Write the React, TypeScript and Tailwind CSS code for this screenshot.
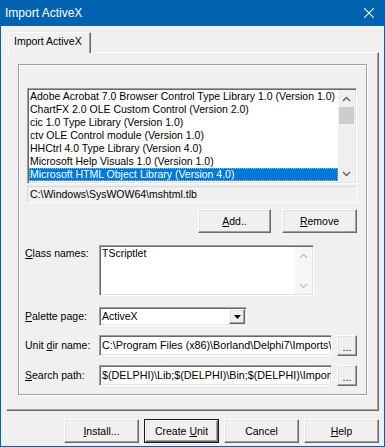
import React from "react";

const libraries = [
  "Adobe Acrobat 7.0 Browser Control Type Library 1.0 (Version 1.0)",
  "ChartFX 2.0 OLE Custom Control (Version 2.0)",
  "cic 1.0 Type Library (Version 1.0)",
  "ctv OLE Control module (Version 1.0)",
  "HHCtrl 4.0 Type Library (Version 4.0)",
  "Microsoft Help Visuals 1.0 (Version 1.0)",
  "Microsoft HTML Object Library (Version 4.0)",
];

const raised =
  "bg-[#f0f0f0] border border-t-white border-l-white border-r-[#696969] border-b-[#696969] shadow-[inset_-1px_-1px_0_#a0a0a0,inset_1px_1px_0_#e3e3e3]";
const sunken =
  "border border-t-[#a0a0a0] border-l-[#a0a0a0] border-r-white border-b-white shadow-[inset_1px_1px_0_#696969,inset_-1px_-1px_0_#e3e3e3]";

function Chevron({ up, color = "#606060" }: { up?: boolean; color?: string }) {
  return (
    <svg width="9" height="6" viewBox="0 0 9 6">
      <path
        d={up ? "M1 5L4.5 1.5L8 5" : "M1 1L4.5 4.5L8 1"}
        stroke={color}
        strokeWidth="1.4"
        fill="none"
      />
    </svg>
  );
}

function Button({ children, className = "" }: { children: React.ReactNode; className?: string }) {
  return (
    <div className={`${raised} flex items-center justify-center ${className}`}>
      <span className="whitespace-pre">{children}</span>
    </div>
  );
}

function Label({ children }: { children: React.ReactNode }) {
  return <div className="w-[74px] -ml-[2px] shrink-0">{children}</div>;
}

export default function App() {
  return (
    <div className="w-[385px] h-[447px] bg-[#0063b1] flex flex-col font-['Liberation_Sans',Arial,sans-serif] text-[10.5px] leading-[13px] text-black select-none">
      <div className="h-[26px] shrink-0 flex items-center pl-[5px] pr-[11px] text-white text-[12px]">
        <span className="flex-1">Import ActiveX</span>
        <svg width="10" height="10" viewBox="0 0 10 10">
          <path d="M0 0L10 10M10 0L0 10" stroke="#fff" strokeWidth="1.1" />
        </svg>
      </div>

      <div className="flex-1 mx-px mb-px bg-[#f0f0f0] flex flex-col">
        {/* tab strip */}
        <div className="pl-[7px] pt-[6px] flex">
          <div className="relative z-10 -mb-px h-[21px] w-[83px] bg-[#f0f0f0] border-t border-l border-r border-t-white border-l-white border-r-[#696969] shadow-[inset_-1px_0_0_#a0a0a0] pl-[5px] pt-[2px]">
            Import ActiveX
          </div>
        </div>

        {/* tab page */}
        <div className="ml-[5px] w-[373px] h-[359px] border border-t-white border-l-white border-r-[#696969] border-b-[#696969] shadow-[inset_-1px_-1px_0_#a0a0a0] pl-[11px] pt-[11px]">
          <div className="w-[349px] h-[331px] border border-[#a0a0a0] shadow-[inset_1px_1px_0_#fff,1px_1px_0_#fff] pl-[8px] pt-[23px] flex flex-col">
            {/* library list */}
            <div className={`w-[330px] h-[96px] bg-white ${sunken} p-px flex`}>
              <div className="flex-1 flex flex-col">
                {libraries.map((lib, i) => (
                  <div
                    key={lib}
                    className={`h-[13px] pl-[1px] whitespace-nowrap overflow-hidden ${
                      i === libraries.length - 1
                        ? "bg-[#0078d7] text-white outline outline-1 outline-dotted -outline-offset-1 outline-[#8cc4f4]"
                        : ""
                    }`}
                  >
                    {lib}
                  </div>
                ))}
              </div>
              <div className="w-[17px] bg-[#f0f0f0] flex flex-col">
                <div className="h-[17px] flex items-center justify-center">
                  <Chevron up />
                </div>
                <div className="h-[17px] mx-px bg-[#cdcdcd]" />
                <div className="flex-1" />
                <div className="h-[17px] flex items-center justify-center">
                  <Chevron />
                </div>
              </div>
            </div>

            {/* file path */}
            <div className="mt-[2px] w-[330px] h-[17px] border border-t-[#d9d9d9] border-l-[#d9d9d9] border-r-white border-b-white pl-[2px] flex items-center whitespace-nowrap">
              {"C:\\Windows\\SysWOW64\\mshtml.tlb"}
            </div>

            <div className="mt-[6px] flex gap-[11px] pl-[171px]">
              <Button className="w-[73px] h-[24px]">
                <span className="underline">A</span>dd..
              </Button>
              <Button className="w-[75px] h-[24px]">
                <span className="underline">R</span>emove
              </Button>
            </div>

            {/* class names */}
            <div className="mt-[12px] flex">
              <Label>
                <div className="pt-[2px]">
                  <span className="underline">C</span>lass names:
                </div>
              </Label>
              <div className={`w-[215px] h-[51px] bg-white ${sunken} p-px flex`}>
                <div className="flex-1 pl-px">TScriptlet</div>
                <div className="w-[17px] flex flex-col justify-between bg-[#f7f7f7]">
                  <div className="h-[17px] flex items-center justify-center">
                    <Chevron up color="#c0c0c0" />
                  </div>
                  <div className="h-[17px] flex items-center justify-center">
                    <Chevron color="#c0c0c0" />
                  </div>
                </div>
              </div>
            </div>

            {/* palette page */}
            <div className="mt-[11px] flex items-center">
              <Label>
                <span className="underline">P</span>alette page:
              </Label>
              <div className={`w-[148px] h-[19px] bg-white ${sunken} p-px flex`}>
                <div className="flex-1 flex items-center pl-px">ActiveX</div>
                <div className={`${raised} w-[16px] flex items-center justify-center`}>
                  <svg width="7" height="4" viewBox="0 0 7 4">
                    <path d="M0 0H7L3.5 4Z" fill="#000" />
                  </svg>
                </div>
              </div>
            </div>

            {/* unit dir */}
            <div className="mt-[9px] flex items-center">
              <Label>
                Unit <span className="underline">d</span>ir name:
              </Label>
              <div className={`w-[233px] h-[21px] bg-white ${sunken} px-[2px] flex items-center overflow-hidden whitespace-nowrap text-[10.75px]`}>
                {"C:\\Program Files (x86)\\Borland\\Delphi7\\Imports\\"}
              </div>
              <Button className="ml-[5px] w-[20px] h-[21px] pt-[3px]">...</Button>
            </div>

            {/* search path */}
            <div className="mt-[9px] flex items-center">
              <Label>
                <span className="underline">S</span>earch path:
              </Label>
              <div className={`w-[233px] h-[21px] bg-white ${sunken} px-[2px] flex items-center overflow-hidden whitespace-nowrap text-[10.75px]`}>
                {"$(DELPHI)\\Lib;$(DELPHI)\\Bin;$(DELPHI)\\Imports"}
              </div>
              <Button className="ml-[5px] w-[20px] h-[21px] pt-[3px]">...</Button>
            </div>
          </div>
        </div>

        {/* dialog buttons */}
        <div className="mt-[8px] flex justify-end gap-[5px] pr-[5px]">
          <Button className="w-[75px] h-[24px]">
            <span className="underline">I</span>nstall...
          </Button>
          <div className="w-[75px] h-[24px] border border-[#1a1a1a] flex">
            <Button className="flex-1">
              Create <span className="underline">U</span>nit
            </Button>
          </div>
          <Button className="w-[75px] h-[24px]">Cancel</Button>
          <Button className="w-[75px] h-[24px]">
            <span className="underline">H</span>elp
          </Button>
        </div>
      </div>
    </div>
  );
}
